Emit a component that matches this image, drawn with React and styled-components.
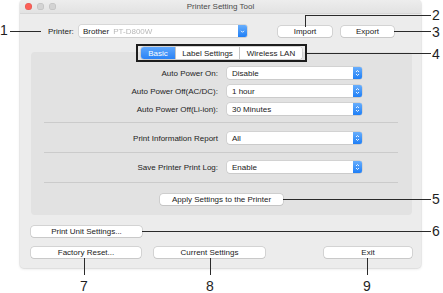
import React from 'react'
import styled, { createGlobalStyle } from 'styled-components'

const GlobalStyle = createGlobalStyle`
  body {
    margin: 0;
    background: #fff;
    font-family: "Liberation Sans", Arial, sans-serif;
  }
`

const Page = styled.div`
  position: relative;
  width: 443px;
  height: 293px;
  overflow: hidden;
  background: #fff;
`

const Window = styled.div`
  margin-left: 20px;
  width: 401px;
  height: 268px;
  background: #ececec;
  border-radius: 4px;
  box-shadow: 0 0 0 1px rgba(0, 0, 0, 0.05), 0 1px 3px rgba(0, 0, 0, 0.12);
  display: flex;
  flex-direction: column;
  overflow: hidden;
`

const TitleBar = styled.div`
  height: 13px;
  display: grid;
  grid-template-columns: 1fr auto 1fr;
  align-items: center;
  background: linear-gradient(#ededed, #e2e2e2);
  border-bottom: 1px solid #d6d6d6;
`

const Lights = styled.div`
  display: flex;
  gap: 5px;
  padding-left: 5px;
`

const Light = styled.span`
  width: 7px;
  height: 7px;
  border-radius: 50%;
  background: ${p => p.$red ? '#fc5f57' : '#d3d3d3'};
  box-shadow: inset 0 0 0 0.5px rgba(0, 0, 0, 0.12);
`

const Title = styled.div`
  font-size: 8px;
  color: #4a4a4a;
`

const Body = styled.div`
  padding: 11px 9px 0 11px;
  display: flex;
  flex-direction: column;
`

const PrinterRow = styled.div`
  display: flex;
  align-items: center;
  height: 12px;
  padding-left: 17px;
`

const PrinterLabel = styled.span`
  width: 31px;
  font-size: 8px;
  color: #222;
`

const Combo = styled.div`
  width: 168px;
  height: 12px;
  display: flex;
  align-items: center;
  background: #fff;
  border-radius: 2px;
  box-shadow: 0 0 0 0.5px #c2c2c2, 0 1px 0 rgba(0, 0, 0, 0.06);
  font-size: 8px;
  color: #222;
`

const ComboText = styled.span`
  flex: 1;
  padding-left: 4px;
  white-space: nowrap;
`

const Blurred = styled.span`
  margin-left: 4px;
  color: #b8b8b8;
  filter: blur(0.6px);
`

const ArrowBox = styled.span`
  width: 9px;
  align-self: stretch;
  display: flex;
  align-items: center;
  justify-content: center;
  background: linear-gradient(#68aefc, #1f7ff6);
  border-radius: 0 2px 2px 0;
`

const Button = styled.div`
  width: ${p => p.$w}px;
  height: 11px;
  margin-left: ${p => p.$ml || 0}px;
  display: flex;
  align-items: center;
  justify-content: center;
  background: #fff;
  border-radius: 3px;
  box-shadow: 0 0 0 0.5px #b9b9b9, 0 1px 0 rgba(0, 0, 0, 0.08);
  font-size: 8px;
  color: #222;
  white-space: nowrap;
`

const TabView = styled.div`
  margin-top: 7px;
  display: flex;
  flex-direction: column;
`

const TabOutline = styled.div`
  position: relative;
  z-index: 1;
  align-self: center;
  display: flex;
  padding: 1px 3px;
  border: 2px solid #1d1d1d;
`

const Segments = styled.div`
  display: flex;
  height: 12px;
  background: #fff;
  border-radius: 3px;
  box-shadow: 0 0 0 0.5px #b9b9b9;
  overflow: hidden;
`

const Segment = styled.div`
  width: ${p => p.$w}px;
  display: flex;
  align-items: center;
  justify-content: center;
  font-size: 8px;
  color: ${p => p.$active ? '#fff' : '#222'};
  background: ${p => p.$active ? 'linear-gradient(#5ea6fb, #2b83f6)' : '#fff'};
  & + & {
    border-left: 1px solid #c4c4c4;
  }
`

const Panel = styled.div`
  margin-top: -10px;
  width: 381px;
  padding: 15px 0 10px;
  background: #e2e2e2;
  border-radius: 4px;
  display: flex;
  flex-direction: column;
`

const Rows = styled.div`
  display: flex;
  flex-direction: column;
  gap: 6px;
  margin-top: ${p => p.$mt || 0}px;
`

const SettingRow = styled.div`
  display: grid;
  grid-template-columns: 187px 135px;
  column-gap: 9px;
  align-items: center;
  height: 12px;
`

const SettingLabel = styled.span`
  text-align: right;
  font-size: 8px;
  color: #222;
  white-space: nowrap;
`

const Select = styled.div`
  height: 12px;
  display: flex;
  align-items: center;
  background: #fff;
  border-radius: 3px;
  box-shadow: 0 0 0 0.5px #c2c2c2, 0 1px 0 rgba(0, 0, 0, 0.06);
  font-size: 8px;
  color: #222;
`

const SelectText = styled.span`
  flex: 1;
  padding-left: 5px;
`

const Divider = styled.div`
  height: 1px;
  margin: ${p => p.$mt}px 14px 0 13px;
  background: #cbcbcb;
`

const Centered = styled.div`
  margin-top: 11px;
  display: flex;
  justify-content: center;
`

const ButtonRow = styled.div`
  margin-top: ${p => p.$mt}px;
  display: flex;
`

const Spacer = styled.div`
  flex: 1;
`

const Callouts = styled.div`
  position: absolute;
  inset: 0;
  pointer-events: none;
`

const Line = styled.div`
  position: absolute;
  left: ${p => p.$x}px;
  top: ${p => p.$y}px;
  width: ${p => p.$w || 1}px;
  height: ${p => p.$h || 1}px;
  background: #2a2a2a;
`

const Num = styled.span`
  position: absolute;
  left: ${p => p.$x}px;
  top: ${p => p.$y}px;
  font-size: 14px;
  line-height: 12px;
  color: #1e1e1e;
`

const UpDown = () => (
  <svg width="5" height="8" viewBox="0 0 5 8">
    <path d="M1 3 L2.5 1.5 L4 3 M1 5 L2.5 6.5 L4 5" fill="none" stroke="#fff" strokeWidth="0.9" />
  </svg>
)

const Down = () => (
  <svg width="5" height="5" viewBox="0 0 5 5">
    <path d="M1 1.8 L2.5 3.3 L4 1.8" fill="none" stroke="#fff" strokeWidth="0.9" />
  </svg>
)

const Setting = ({ label, value }) => (
  <SettingRow>
    <SettingLabel>{label}</SettingLabel>
    <Select>
      <SelectText>{value}</SelectText>
      <ArrowBox><UpDown /></ArrowBox>
    </Select>
  </SettingRow>
)

const lines = [
  { x: 10, y: 31, w: 31 },
  { x: 305, y: 15, h: 12 },
  { x: 305, y: 15, w: 126 },
  { x: 394, y: 31, w: 37 },
  { x: 305, y: 53, w: 126 },
  { x: 283, y: 199, w: 148 },
  { x: 142, y: 231, w: 289 },
  { x: 84, y: 258, h: 17 },
  { x: 210, y: 258, h: 17 },
  { x: 367, y: 258, h: 17 },
]

const nums = [
  { n: 1, x: 0, y: 24 },
  { n: 2, x: 432, y: 9 },
  { n: 3, x: 432, y: 26 },
  { n: 4, x: 432, y: 48 },
  { n: 5, x: 432, y: 193 },
  { n: 6, x: 432, y: 225 },
  { n: 7, x: 80, y: 280 },
  { n: 8, x: 206, y: 280 },
  { n: 9, x: 363, y: 280 },
]

export default function App() {
  return (
    <Page>
      <GlobalStyle />
      <Window>
        <TitleBar>
          <Lights>
            <Light $red />
            <Light />
            <Light />
          </Lights>
          <Title>Printer Setting Tool</Title>
          <div />
        </TitleBar>
        <Body>
          <PrinterRow>
            <PrinterLabel>Printer:</PrinterLabel>
            <Combo>
              <ComboText>Brother<Blurred>PT-D800W</Blurred></ComboText>
              <ArrowBox><Down /></ArrowBox>
            </Combo>
            <Button $w={54} $ml={31}>Import</Button>
            <Button $w={53} $ml={9}>Export</Button>
          </PrinterRow>

          <TabView>
            <TabOutline>
              <Segments>
                <Segment $w={34} $active>Basic</Segment>
                <Segment $w={63}>Label Settings</Segment>
                <Segment $w={62}>Wireless LAN</Segment>
              </Segments>
            </TabOutline>
            <Panel>
              <Rows>
                <Setting label="Auto Power On:" value="Disable" />
                <Setting label="Auto Power Off(AC/DC):" value="1 hour" />
                <Setting label="Auto Power Off(Li-ion):" value="30 Minutes" />
              </Rows>
              <Divider $mt={7} />
              <Rows $mt={9}>
                <Setting label="Print Information Report" value="All" />
              </Rows>
              <Divider $mt={8} />
              <Rows $mt={8}>
                <Setting label="Save Printer Print Log:" value="Enable" />
              </Rows>
              <Divider $mt={9} />
              <Centered>
                <Button $w={123}>Apply Settings to the Printer</Button>
              </Centered>
            </Panel>
          </TabView>

          <ButtonRow $mt={11}>
            <Button $w={111}>Print Unit Settings...</Button>
          </ButtonRow>
          <ButtonRow $mt={10}>
            <Button $w={110}>Factory Reset...</Button>
            <Button $w={111} $ml={13}>Current Settings</Button>
            <Spacer />
            <Button $w={88}>Exit</Button>
          </ButtonRow>
        </Body>
      </Window>

      <Callouts>
        {lines.map((l, i) => (
          <Line key={i} $x={l.x} $y={l.y} $w={l.w} $h={l.h} />
        ))}
        {nums.map(d => (
          <Num key={d.n} $x={d.x} $y={d.y}>{d.n}</Num>
        ))}
      </Callouts>
    </Page>
  )
}
